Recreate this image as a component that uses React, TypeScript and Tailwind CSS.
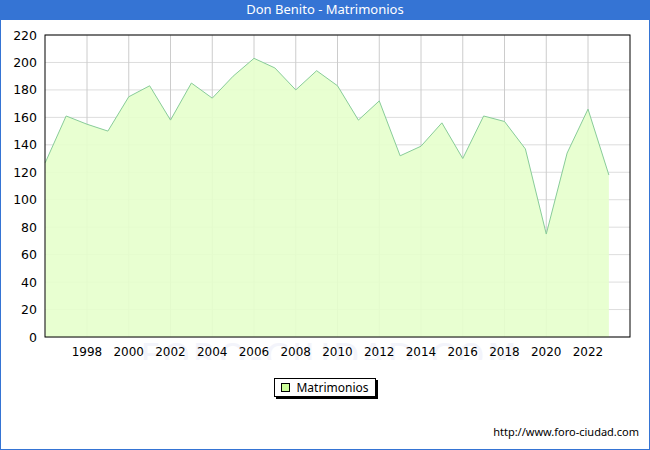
const DATA = [127,161,155,150,175,183,158,185,174,190,203,196,180,194,183,158,172,132,139,156,130,161,157,137,75,134,166,118];
const X0 = 45, X1 = 630, Y0 = 35, Y1 = 337;
const px = (i: number) => 45.25 + i * 20.875;
const py = (v: number) => Y1 - (v / 220) * (Y1 - Y0);

export default function App() {
  const pts = DATA.map((v, i) => `${px(i)},${py(v)}`).join(" ");
  const area = `${px(0)},${Y1} ${pts} ${px(DATA.length - 1)},${Y1}`;
  return (
    <div className="w-[650px] h-[450px] flex flex-col bg-white border border-t-0 border-[#3574d4] font-['DejaVu_Sans',sans-serif] text-[12px] text-black">
      <div className="h-[20px] bg-[#3574d4] text-white text-[13px] flex items-center justify-center">Don Benito - Matrimonios</div>
      <svg width="648" height="340" className="block" style={{ fontFamily: "DejaVu Sans, sans-serif" }}>
        <g transform="translate(-1,-20)">
          <text x={330} y={368} textAnchor="middle" fontSize="34" fill="#f3f4fb" letterSpacing="3">FORO-CIUDAD.COM</text>
          {Array.from({ length: 12 }, (_, k) => (
            <g key={k}>
              <line x1={X0} x2={X1} y1={py(k * 20)} y2={py(k * 20)} stroke="#dddddd" />
              <text x={37} y={py(k * 20) + 4.5} textAnchor="end" fontSize="12.5">{k * 20}</text>
            </g>
          ))}
          {Array.from({ length: 13 }, (_, k) => (
            <g key={k}>
              <line x1={px(2 + k * 2)} x2={px(2 + k * 2)} y1={Y0} y2={Y1} stroke="#cccccc" />
              <text x={px(2 + k * 2)} y={356} textAnchor="middle" fontSize="12">{1998 + k * 2}</text>
            </g>
          ))}
          <polygon points={area} fill="#e6ffcc" fillOpacity="0.9" />
          <polyline points={pts} fill="none" stroke="#88cc99" strokeWidth="1" />
          <rect x={X0} y={Y0} width={X1 - X0} height={Y1 - Y0} fill="none" stroke="#000" />
        </g>
      </svg>
      <div className="flex justify-center mt-[18px]">
        <div className="flex items-center gap-[6px] border border-black shadow-[2px_2px_0_#000] px-[6px] h-[19px] text-[12px]">
          <span className="w-[9px] h-[9px] border border-black bg-[#ccff99]" />
          Matrimonios
        </div>
      </div>
      <div className="mt-auto mb-[9px] mr-[10px] text-right text-[11px]">http://www.foro-ciudad.com</div>
    </div>
  );
}
